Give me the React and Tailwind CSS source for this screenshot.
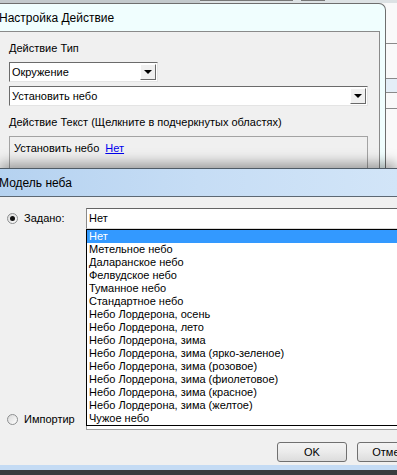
import React from 'react';

const SKIES = [
  'Нет',
  'Метельное небо',
  'Даларанское небо',
  'Фелвудское небо',
  'Туманное небо',
  'Стандартное небо',
  'Небо Лордерона, осень',
  'Небо Лордерона, лето',
  'Небо Лордерона, зима',
  'Небо Лордерона, зима (ярко-зеленое)',
  'Небо Лордерона, зима (розовое)',
  'Небо Лордерона, зима (фиолетовое)',
  'Небо Лордерона, зима (красное)',
  'Небо Лордерона, зима (желтое)',
  'Чужое небо',
];

function DropButton() {
  return (
    <div className="w-[16px] h-full flex items-center justify-center bg-[#f0f0f0] border-t border-l border-t-white border-l-white border-b border-r border-b-[#696969] border-r-[#696969]">
      <div className="w-0 h-0 border-l-[4px] border-r-[4px] border-t-[4px] border-l-transparent border-r-transparent border-t-black" />
    </div>
  );
}

function Combo({ value, className }) {
  return (
    <div className={`h-[20px] flex bg-white border-t border-l border-t-[#6b6b6b] border-l-[#6b6b6b] border-b border-r border-b-[#e4e4e4] border-r-[#e4e4e4] p-[1px] ${className}`}>
      <div className="flex-1 pl-[1px] leading-[17px]">{value}</div>
      <DropButton />
    </div>
  );
}

function Radio({ checked }) {
  return (
    <div className="w-[11px] h-[11px] flex-shrink-0 rounded-full border border-[#8d8f90] bg-linear-to-br from-[#d9d9d9] to-white flex items-center justify-center">
      {checked && <div className="w-[5px] h-[5px] rounded-full bg-[#111]" />}
    </div>
  );
}

function WinButton({ children }) {
  return (
    <div className="w-[70px] h-[20px] flex-shrink-0 rounded-[3px] border border-[#707070] bg-linear-to-b from-[#f3f3f3] via-[#ebebeb] to-[#dcdcdc] flex items-center justify-center leading-none">
      {children}
    </div>
  );
}

export default function App() {
  return (
    <div className="w-[397px] h-[475px] overflow-hidden flex flex-col bg-[#f6f6f6] text-black text-[11px] font-['Liberation_Sans',Arial,sans-serif]">
      {/* strip of whatever is behind */}
      <div className="h-[3px] flex bg-[#dde2e4]">
        <div className="w-[200px] bg-[#c3c9cc]" />
        <div className="w-[93px] h-[1px] bg-[#777]" />
        <div className="w-[8px]" />
        <div className="w-[24px] h-[1px] bg-[#777]" />
      </div>

      {/* Настройка Действие */}
      <div className="h-[165px] flex">
        <div className="w-[386px] flex flex-col bg-[#f0fefe] border-t border-r border-[#6e6e6e] rounded-tr-[7px]">
          <div className="h-[27px] flex items-center text-[12px] -ml-[1px]">Настройка Действие</div>
          <div className="flex-1 mr-[5px] flex flex-col bg-[#f0f0f0] border-t border-r border-[#8a8a8a]">
            <div className="pl-[9px] pt-[10px] leading-[13px]">Действие Тип</div>
            <Combo value="Окружение" className="ml-[9px] mt-[7px] w-[149px]" />
            <Combo value="Установить небо" className="ml-[9px] mt-[4px] w-[359px]" />
            <div className="pl-[9px] mt-[10px] leading-[13px]">Действие Текст (Щелкните в подчеркнутых областях)</div>
            <div className="ml-[9px] mt-[7px] w-[359px] flex-1 border-t border-l border-r border-[#a3a3a3] pl-[4px] pt-[5px] leading-[13px]">
              Установить небо <span className="ml-[3px] text-[#0000ee] underline">Нет</span>
            </div>
          </div>
        </div>
        <div className="flex-1 flex flex-col bg-[#f9f9f9]">
          <div className="h-[40px]" />
          <div className="border-t border-[#8a8a8a] h-[35px]" />
          <div className="border-t border-[#8a8a8a] h-[14px] bg-[#e4eef7]" />
          <div className="border-t border-[#8a8a8a] h-[16px]" />
          <div className="border-t border-[#8a8a8a]" />
        </div>
      </div>

      {/* Модель неба */}
      <div className="relative z-10 flex-1 flex flex-col border-t border-[#4f5b66] shadow-[0_-5px_12px_rgba(0,0,0,0.35)]">
        <div className="h-[28px] flex items-center border-b border-[#5d6873] bg-linear-to-r from-[#b5d2f0] via-[#c6ddf5] to-[#d2e5f8] text-[12px] -ml-[1px]">
          Модель неба
        </div>
        <div className="relative flex-1 flex flex-col bg-[#f0f0f0]">
          <div className="mt-[11px] h-[21px] flex items-center">
            <div className="w-[86px] flex-shrink-0 flex items-center pl-[7px] gap-[6px]">
              <Radio checked />
              <span>Задано:</span>
            </div>
            <div className="w-[330px] h-full flex-shrink-0 bg-white border-t border-t-[#646464] border-b border-b-[#dadada] border-l border-l-[#8a8a8a] pl-[2px] leading-[19px]">
              Нет
            </div>
          </div>

          <div className="mt-[180px] h-[21px] flex items-center">
            <div className="w-[86px] flex-shrink-0 flex items-center pl-[7px] gap-[6px]">
              <Radio />
              <span className="w-[52px] overflow-hidden whitespace-nowrap">Импортир</span>
            </div>
            <div className="w-[330px] h-full flex-shrink-0 bg-white border border-[#a0a0a0]" />
          </div>

          <div className="mt-[12px] flex gap-[10px] pl-[277px]">
            <WinButton>OK</WinButton>
            <WinButton>Отмена</WinButton>
          </div>

          {/* open dropdown list */}
          <div className="absolute left-[86px] top-[32px] w-[330px] h-[197px] bg-white border border-black">
            {SKIES.map((s, i) => (
              <div
                key={s}
                className={`h-[13px] leading-[13px] pl-[2px] whitespace-nowrap ${i === 0 ? 'bg-[#3399ff] text-white' : ''}`}
              >
                {s}
              </div>
            ))}
          </div>
        </div>
        <div className="h-[5px] bg-[#c4dbf4]" />
        <div className="h-[5px] bg-[#3a3d40]" />
      </div>
    </div>
  );
}
